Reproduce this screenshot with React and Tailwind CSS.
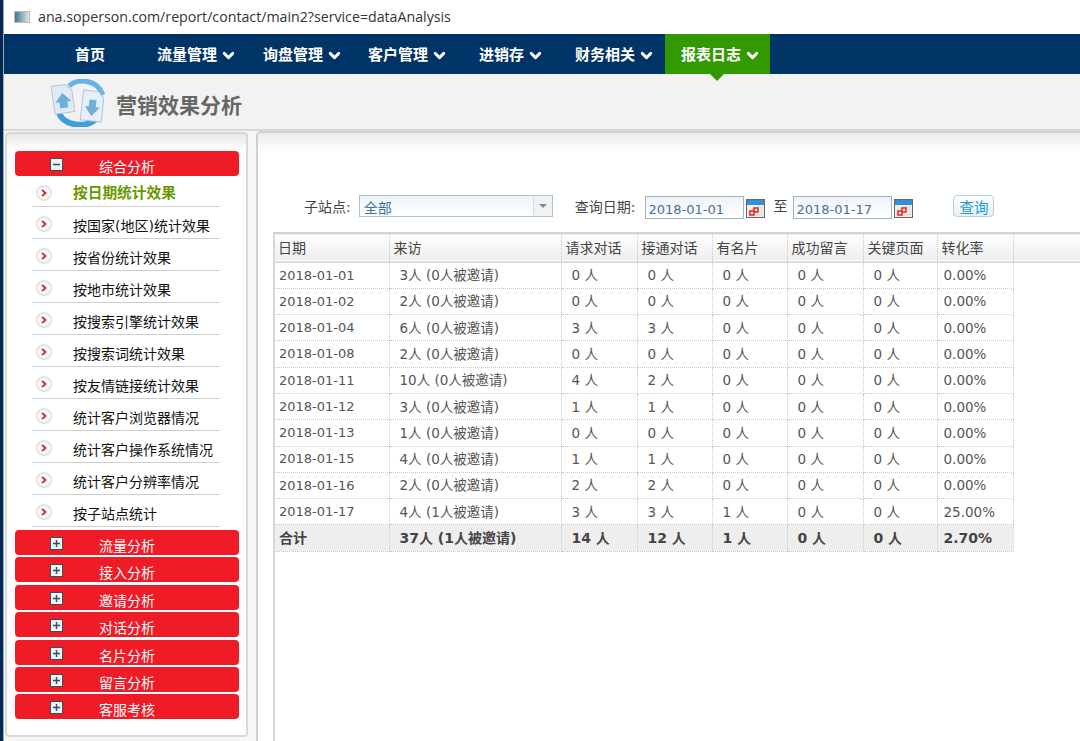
import { ChevronDown } from "lucide-react";

const navItems = [
  { label: "流量管理", pad: "pr-[10px]" },
  { label: "询盘管理", pad: "pr-[9px]" },
  { label: "客户管理", pad: "pr-[15px]" },
  { label: "进销存", pad: "pr-[15px]" },
  { label: "财务相关", pad: "pr-[10px]" },
];

const subItems = [
  "按日期统计效果",
  "按国家(地区)统计效果",
  "按省份统计效果",
  "按地市统计效果",
  "按搜索引擎统计效果",
  "按搜索词统计效果",
  "按友情链接统计效果",
  "统计客户浏览器情况",
  "统计客户操作系统情况",
  "统计客户分辨率情况",
  "按子站点统计",
];

const groups = ["流量分析", "接入分析", "邀请分析", "对话分析", "名片分析", "留言分析", "客服考核"];

const headers = ["日期", "来访", "请求对话", "接通对话", "有名片", "成功留言", "关键页面", "转化率"];

const rows = [
  ["2018-01-01", "3人 (0人被邀请)", "0 人", "0 人", "0 人", "0 人", "0 人", "0.00%"],
  ["2018-01-02", "2人 (0人被邀请)", "0 人", "0 人", "0 人", "0 人", "0 人", "0.00%"],
  ["2018-01-04", "6人 (0人被邀请)", "3 人", "3 人", "0 人", "0 人", "0 人", "0.00%"],
  ["2018-01-08", "2人 (0人被邀请)", "0 人", "0 人", "0 人", "0 人", "0 人", "0.00%"],
  ["2018-01-11", "10人 (0人被邀请)", "4 人", "2 人", "0 人", "0 人", "0 人", "0.00%"],
  ["2018-01-12", "3人 (0人被邀请)", "1 人", "1 人", "0 人", "0 人", "0 人", "0.00%"],
  ["2018-01-13", "1人 (0人被邀请)", "0 人", "0 人", "0 人", "0 人", "0 人", "0.00%"],
  ["2018-01-15", "4人 (0人被邀请)", "1 人", "1 人", "0 人", "0 人", "0 人", "0.00%"],
  ["2018-01-16", "2人 (0人被邀请)", "2 人", "2 人", "0 人", "0 人", "0 人", "0.00%"],
  ["2018-01-17", "4人 (1人被邀请)", "3 人", "3 人", "1 人", "0 人", "0 人", "25.00%"],
];

const totals = ["合计", "37人 (1人被邀请)", "14 人", "12 人", "1 人", "0 人", "0 人", "2.70%"];

function cellPad(i) {
  if (i === 0) return "pl-[4px] text-[13px]";
  if (i === 7) return "pl-[6px]";
  return "pl-[10px]";
}

function Logo() {
  return (
    <svg width="58" height="48" viewBox="0 0 58 48" className="ml-[47px] mt-[5px] shrink-0">
      <path d="M8 34 C13 47 34 49 44 41" fill="none" stroke="#3f9fdc" strokeWidth="6" />
      <path d="M18 7 C27 -1 46 0 52 16" fill="none" stroke="#62b5e8" strokeWidth="5" />
      <g transform="rotate(-8 12 20)">
        <path d="M2 6 H16 L22 12 V34 H2 Z" fill="#dfeaf4" stroke="#b3c5d6" />
        <path d="M12 14 L20 23 H16 V29 H8 V23 H4 Z" fill="#6fb0d8" />
      </g>
      <g transform="rotate(6 42 26)">
        <path d="M31 12 H46 L52 18 V42 H31 Z" fill="#e6eff7" stroke="#b3c5d6" />
        <path d="M41.5 37 L34 28 H38 V21 H45 V28 H49 Z" fill="#6fb0d8" />
      </g>
    </svg>
  );
}

function Calendar() {
  return (
    <svg width="19" height="19" viewBox="0 0 19 19" className="shrink-0">
      <rect x="0.5" y="0.5" width="18" height="18" fill="#f1efe8" stroke="#666" />
      <rect x="1" y="1" width="17" height="5" fill="#2f8fe0" />
      <path d="M11 8 H16 V16 H3 V12 H7 V9 H11 Z" fill="#eee" stroke="#bbb" strokeWidth="0.5" />
      <path d="M4 16 V12 H8 V9 H12 V13 H8 V16 Z" fill="none" stroke="#e8261c" strokeWidth="1.5" />
    </svg>
  );
}

function ToggleBox({ open }) {
  return (
    <svg width="13" height="13" viewBox="0 0 13 13" className="absolute left-[35px] top-[7px]">
      <rect x="0.5" y="0.5" width="12" height="12" fill="#eef3f4" stroke="#35525e" />
      <path d="M3 6.5 H10" stroke="#35525e" strokeWidth="1.4" />
      {!open && <path d="M6.5 3 V10" stroke="#35525e" strokeWidth="1.4" />}
    </svg>
  );
}

function RedBar({ label, open }) {
  return (
    <div className="relative h-[25px] w-[224px] rounded-[4px] bg-[#ef1c27] overflow-hidden text-center text-white text-[14px] leading-[33px]">
      <ToggleBox open={open} />
      {label}
    </div>
  );
}

function DateInput({ value }) {
  return (
    <div className="w-[99px] h-[23px] mt-[1px] border border-[#9db4c6] bg-gradient-to-b from-[#eef3f7] to-white pl-[2px] text-[13px] leading-[26px] text-[#4a6f9c]">
      {value}
    </div>
  );
}

export default function App() {
  return (
    <div className="flex w-[1080px] h-[741px] overflow-hidden bg-white font-['DejaVu_Sans','Noto_Sans_CJK_SC',sans-serif]">
      <div className="w-[4px] shrink-0 bg-[#0a2747] border-r border-[#7fb2dc]" />
      <div className="flex flex-col flex-1 min-w-0">
        <div className="flex items-center h-[34px] pl-[10px] bg-white">
          <div className="w-[16px] h-[12px] border border-[#bbb] bg-gradient-to-r from-[#3d7a8c] to-[#dfe7ea]" />
          <span className="ml-[8px] text-[14.2px] text-[#333] font-['Open_Sans',sans-serif]">
            ana.soperson.com/report/contact/main2?service=dataAnalysis
          </span>
        </div>

        <nav className="flex h-[40px] shrink-0 pl-[55px] bg-[#003366] text-white text-[15px] font-bold">
          <div className="flex items-center pt-[2px] pl-[16px] pr-[36px]">首页</div>
          {navItems.map((item) => (
            <div key={item.label} className={`flex items-center pt-[2px] pl-[16px] ${item.pad}`}>
              {item.label}
              <ChevronDown size={17} strokeWidth={4} className="ml-[3px]" />
            </div>
          ))}
          <div className="relative flex items-center pt-[2px] pl-[16px] pr-[9px] bg-[#339900]">
            报表日志
            <ChevronDown size={17} strokeWidth={4} className="ml-[3px]" />
            <div className="absolute left-[45px] top-[40px] w-0 h-0 border-x-[7px] border-x-transparent border-t-[7px] border-t-[#339900]" />
          </div>
        </nav>

        <div className="flex h-[57px] shrink-0 bg-[#f2f2f2] border-b-2 border-[#d8d8d8]">
          <Logo />
          <h1 className="ml-[7px] mt-[15px] text-[21px] leading-[34px] font-bold text-[#666]">营销效果分析</h1>
        </div>

        <div className="flex flex-1 min-h-0 bg-[#f7f7f7]">
          <aside className="w-[243px] h-[605px] ml-[1px] mt-[1px] shrink-0 flex flex-col pt-[17px] pl-[8px] bg-white border-2 border-[#d9d9d9] rounded-[4px] bg-[linear-gradient(#e8e8e8,#fff_17px)]">
            <RedBar label="综合分析" open />
            <ul className="ml-[17px] w-[188px] mb-[3px]">
              {subItems.map((item, i) => (
                <li
                  key={item}
                  className={`flex border-b border-[#cfcfcf] ${i === 0 ? "h-[31px]" : "h-[32px]"}`}
                >
                  <span className="flex items-center justify-center w-[16px] h-[16px] ml-[4px] mt-[9px] rounded-full bg-white border-2 border-[#e3e3e3] shrink-0">
                    <svg width="6" height="8" viewBox="0 0 6 8">
                      <path d="M1 1 L4.5 4 L1 7" fill="none" stroke="#e02020" strokeWidth="1.8" />
                    </svg>
                  </span>
                  <span
                    className={`ml-[21px] whitespace-nowrap ${
                      i === 0
                        ? "mt-[6px] text-[14.7px] leading-[22px] font-bold text-[#669900]"
                        : "mt-[8px] text-[14px] leading-[22px] text-[#111]"
                    }`}
                  >
                    {item}
                  </span>
                </li>
              ))}
            </ul>
            <div className="flex flex-col gap-[2.4px]">
              {groups.map((g) => (
                <RedBar key={g} label={g} />
              ))}
            </div>
          </aside>

          <main className="flex flex-col flex-1 min-w-0 ml-[8px] pt-[62px] pl-[15px] bg-white border-l-2 border-t-2 border-[#d0d0d0] rounded-tl-[5px] bg-[linear-gradient(#ececec,#fff_18px)]">
            <div className="flex h-[23px] text-[14px] text-[#444]">
              <span className="ml-[31px] mr-[8px] leading-[24px] whitespace-nowrap">子站点:</span>
              <div className="flex w-[194px] h-[22px] border border-[#a9c3d6] bg-gradient-to-b from-[#eef4f8] to-white">
                <span className="flex-1 pl-[4px] leading-[25px] text-[#3a6ea5]">全部</span>
                <span className="flex items-center justify-center w-[19px] border-l border-[#d5dde3] bg-[#f2f2f2]">
                  <span className="w-0 h-0 border-x-[4px] border-x-transparent border-t-[4px] border-t-[#888]" />
                </span>
              </div>
              <span className="ml-[22px] mr-[10px] leading-[24px] whitespace-nowrap">查询日期:</span>
              <DateInput value="2018-01-01" />
              <span className="ml-[2px] mt-[4px]"><Calendar /></span>
              <span className="ml-[8px] mr-[6px] leading-[22px]">至</span>
              <DateInput value="2018-01-17" />
              <span className="ml-[2px] mt-[4px]"><Calendar /></span>
              <button className="ml-[40px] w-[41px] h-[22px] border border-[#b9d0dd] rounded-[4px] bg-gradient-to-b from-white to-[#e6eff4] text-[14.5px] leading-[24px] text-[#1a9ad6]">
                查询
              </button>
            </div>

            <div className="flex-1 mt-[14px] border-l-2 border-[#d8d8d8]">
              <table className="table-fixed border-collapse w-[806px] text-[13.5px] text-[#555]">
                <colgroup>
                  <col className="w-[114px]" />
                  <col className="w-[172px]" />
                  <col className="w-[76px]" />
                  <col className="w-[75px]" />
                  <col className="w-[75px]" />
                  <col className="w-[76px]" />
                  <col className="w-[74px]" />
                  <col className="w-[76px]" />
                  <col />
                </colgroup>
                <thead>
                  <tr className="h-[29px] bg-gradient-to-b from-white to-[#eeeeee] border-t-2 border-b-2 border-t-[#d4d4d4] border-b-[#dddddd]">
                    {headers.map((h, i) => (
                      <th key={h} className={`${i === 0 ? "pl-[3px]" : "pl-[4px]"} pt-[1px] text-left font-normal text-[14px] text-[#444] border-r border-dotted border-[#c8c8c8]`}>
                        {h}
                      </th>
                    ))}
                    <th />
                  </tr>
                </thead>
                <tbody>
                  {rows.map((row) => (
                    <tr key={row[0]} className="h-[26.3px]">
                      {row.map((c, i) => (
                        <td key={i} className={`${cellPad(i)} whitespace-nowrap border-r border-b border-dotted border-[#c8c8c8]`}>
                          {c}
                        </td>
                      ))}
                    </tr>
                  ))}
                  <tr className="h-[26.3px]">
                    {totals.map((c, i) => (
                      <td key={i} className={`${i === 0 ? "pl-[4px]" : i === 7 ? "pl-[6px]" : "pl-[10px]"} text-[14px] whitespace-nowrap font-bold text-[#444] bg-[#eeeeee] border-r border-b border-dotted border-[#c8c8c8]`}>
                        {c}
                      </td>
                    ))}
                  </tr>
                </tbody>
              </table>
            </div>
          </main>
        </div>
      </div>
    </div>
  );
}
